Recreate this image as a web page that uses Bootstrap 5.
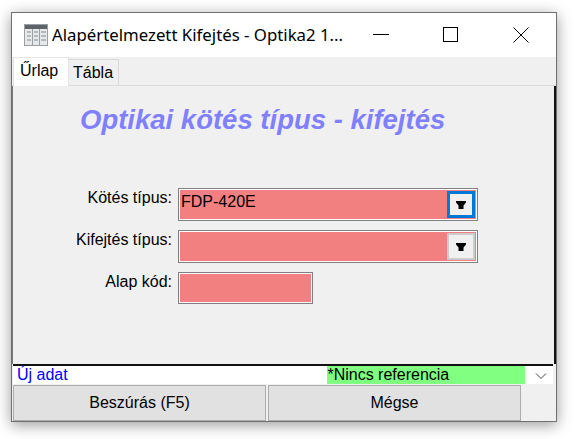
<!DOCTYPE html>
<html lang="hu">
<head>
<meta charset="utf-8">
<title>Alapértelmezett Kifejtés</title>
<link rel="stylesheet" href="https://cdn.jsdelivr.net/npm/bootstrap@5.3.0/dist/css/bootstrap.min.css">
<style>
html,body{margin:0;padding:0;background:#fff;height:439px;overflow:hidden}
body{font-family:"Liberation Sans",Arial,sans-serif;font-size:16px;line-height:18px;color:#000}
.win{margin:12px 0 0 11px;width:546px;height:410px;border:1px solid #707070;box-shadow:0 3px 14px rgba(0,0,0,.4);background:#f0f0f0}
.titlebar{height:44px;background:#fff}
.ticon{margin-left:12px;width:24px;height:22px;flex:none}
.ttext{margin-left:4px;font-family:"Noto Sans","Open Sans",sans-serif;font-size:16.8px;white-space:nowrap;width:304px}
.wbtns{margin-left:auto;margin-right:0}
.wbtn{width:70px;height:44px}
.tabstrip{height:29px;border-bottom:1px solid #dcdcdc;padding-left:1px;align-items:flex-end;background:#f0f0f0}
.tabon{height:29px;width:56px;background:#fff;border:1px solid #e4e4e4;border-bottom:0;padding:4px 0 0 6px;margin-bottom:-1px}
.taboff{height:26px;width:50px;border:1px solid #d9d9d9;border-bottom:0;border-left:0;padding:4px 0 0 4px}
.panel{height:278px;border-right:2px solid #111;border-left:1px solid #777}
.heading{margin:0;padding:17px 0 0 67px;height:102px;font-size:27.5px;line-height:34px;font-weight:700;font-style:italic;color:#8080ff;white-space:pre}
.frow{height:33px;margin-bottom:9px}
.flabel{width:159px;text-align:right;padding-top:1px}
.fbox{margin-left:6px;height:33px;padding:1px;border:1px solid #808080;background:#fff}
.wfull{width:300px}
.wshort{width:135px;height:32px}
.fill{height:100%;background:#f38080;padding-left:1px;line-height:24px}
.ddbtn{width:28px;height:27px;margin:1px 1px 0 0;background:#f0f0f0;border:2px solid #ccc}
.ddfocus{border:3px solid #0078d7}
.statusrow{height:20px;background:#fff;border-top:2px solid #111;margin-right:3px;margin-left:1px;line-height:18px}
.newdata{color:#0000ff;padding-left:4px;width:315px}
.refbox{background:#80ff80;width:198px;height:18px}
.chev{width:28px;padding:2px 0 0 3px}
.btnrow{padding:1px 0 0 1px;gap:2px}
.wbutton{width:253px;height:36px;background:#e1e1e1;border:1px solid #adadad;border-radius:0;font-size:16px;line-height:18px;color:#000;padding:0;font-family:inherit}
</style>
</head>
<body>
<div class="win">
  <div class="titlebar d-flex align-items-center">
    <svg class="ticon" viewBox="0 0 24 22"><rect x=".5" y=".5" width="23" height="21" fill="#e6e8ea" stroke="#9a9fa3"/><rect x="1" y="1" width="22" height="4" fill="#5d6368"/><path d="M8.5 5V21M15.5 5V21" stroke="#9a9fa3"/><g fill="#b4b9bd"><rect x="3" y="7" width="4" height="2"/><rect x="10" y="7" width="4" height="2"/><rect x="17" y="7" width="5" height="2"/><rect x="3" y="11" width="4" height="2"/><rect x="10" y="11" width="4" height="2"/><rect x="17" y="11" width="5" height="2"/><rect x="3" y="15" width="4" height="2"/><rect x="10" y="15" width="4" height="2"/><rect x="17" y="15" width="5" height="2"/></g></svg>
    <div class="ttext">Alapértelmezett Kifejtés - Optika2 1...</div>
    <div class="wbtns d-flex">
      <div class="wbtn d-flex align-items-center justify-content-center"><svg width="16" height="16" viewBox="0 0 16 16"><path d="M0 7.5H16" stroke="#000"/></svg></div>
      <div class="wbtn d-flex align-items-center justify-content-center"><svg width="16" height="16" viewBox="0 0 16 16"><rect x=".5" y=".5" width="14" height="14" fill="none" stroke="#000"/></svg></div>
      <div class="wbtn d-flex align-items-center justify-content-center"><svg width="16" height="16" viewBox="0 0 16 16"><path d="M.5 .5L15.5 15.5M15.5 .5L.5 15.5" stroke="#000" fill="none"/></svg></div>
    </div>
  </div>
  <div class="tabstrip d-flex">
    <div class="tabon">Űrlap</div>
    <div class="taboff">Tábla</div>
  </div>
  <div class="panel">
    <h1 class="heading">Optikai kötés típus - kifejtés</h1>
    <div class="frow d-flex">
      <div class="flabel">Kötés típus:</div>
      <div class="fbox wfull"><div class="fill d-flex justify-content-between">FDP-420E<div class="ddbtn ddfocus d-flex align-items-center justify-content-center"><svg width="10" height="8" viewBox="0 0 10 8"><path d="M0 0H10V1.5L7.5 4.5V8H2.5V4.5L0 1.5Z" fill="#000"/></svg></div></div></div>
    </div>
    <div class="frow d-flex">
      <div class="flabel">Kifejtés típus:</div>
      <div class="fbox wfull"><div class="fill d-flex justify-content-end"><div class="ddbtn d-flex align-items-center justify-content-center"><svg width="10" height="8" viewBox="0 0 10 8"><path d="M0 0H10V1.5L7.5 4.5V8H2.5V4.5L0 1.5Z" fill="#000"/></svg></div></div></div>
    </div>
    <div class="frow d-flex">
      <div class="flabel">Alap kód:</div>
      <div class="fbox wshort"><div class="fill"></div></div>
    </div>
  </div>
  <div class="statusrow d-flex">
    <div class="newdata">Új adat</div>
    <div class="refbox">*Nincs referencia</div>
    <div class="chev d-flex align-items-center justify-content-center"><svg width="12" height="8" viewBox="0 0 12 8"><path d="M1 1.5L6 6.5L11 1.5" stroke="#444" fill="none"/></svg></div>
  </div>
  <div class="btnrow d-flex">
    <button type="button" class="btn wbutton">Beszúrás (F5)</button>
    <button type="button" class="btn wbutton">Mégse</button>
  </div>
</div>
<script src="https://cdn.jsdelivr.net/npm/bootstrap@5.3.0/dist/js/bootstrap.bundle.min.js"></script>
</body>
</html>
